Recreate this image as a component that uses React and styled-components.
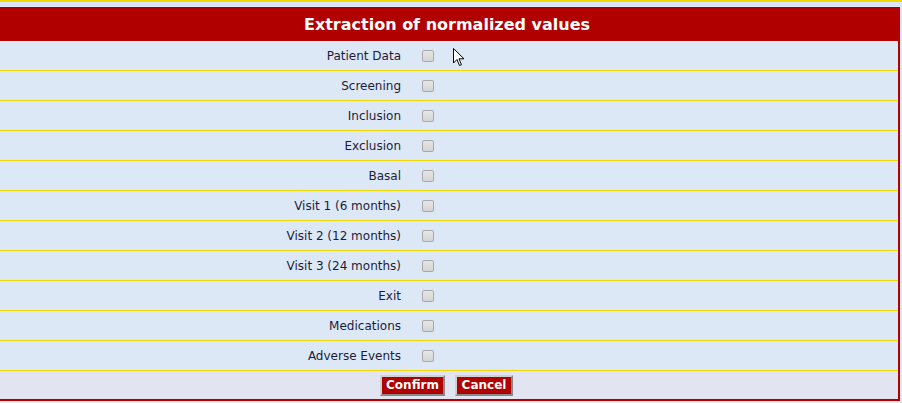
import styled, { createGlobalStyle } from 'styled-components';

const GlobalStyle = createGlobalStyle`
  html, body {
    margin: 0;
    padding: 0;
    background: #dde8f7;
  }
  body {
    font-family: "DejaVu Sans", Verdana, sans-serif;
  }
`;

const sections = [
  'Patient Data',
  'Screening',
  'Inclusion',
  'Exclusion',
  'Basal',
  'Visit 1 (6 months)',
  'Visit 2 (12 months)',
  'Visit 3 (24 months)',
  'Exit',
  'Medications',
  'Adverse Events',
];

const Page = styled.div`
  position: relative;
  width: 902px;
  height: 403px;
  overflow: hidden;
`;

const TopRule = styled.div`
  height: 2px;
  background: #f0d800;
  margin-bottom: 5px;
`;

const Panel = styled.div`
  width: 898px;
  border-right: 2px solid #b00000;
  border-bottom: 2px solid #b00000;
`;

const Header = styled.h1`
  margin: 0 -2px 0 0;
  height: 34px;
  background: #b00000;
  color: #fff;
  font-size: 16px;
  font-weight: bold;
  display: flex;
  align-items: center;
  justify-content: center;
  padding-right: 6px;
`;

const Row = styled.label`
  display: grid;
  grid-template-columns: 401px 1fr;
  align-items: center;
  height: 29px;
  border-bottom: 1px solid #f0d800;
  background: #dde8f7;
`;

const Label = styled.span`
  text-align: right;
  font-size: 12px;
  color: #1c1c3a;
`;

const Check = styled.input`
  appearance: none;
  margin: 0 0 0 21px;
  width: 12px;
  height: 12px;
  border: 1px solid #a9a9a9;
  border-radius: 2px;
  background: linear-gradient(#e6e6e6, #d4d4d4);
`;

const Footer = styled.div`
  height: 28px;
  background: #e3e4f1;
  display: flex;
  align-items: center;
  justify-content: center;
  gap: 10px;
  padding-right: 5px;
`;

const Button = styled.button`
  height: 21px;
  padding: 0;
  background: #b00000;
  color: #fff;
  font-family: "DejaVu Sans", Verdana, sans-serif;
  font-size: 12px;
  font-weight: bold;
  border: 2px solid;
  border-color: #d0d0d0 #888 #888 #d0d0d0;
  width: ${(p) => p.$w}px;
`;

const Cursor = styled.svg`
  position: absolute;
  left: 453px;
  top: 48px;
`;

export default function App() {
  return (
    <Page>
      <GlobalStyle />
      <TopRule />
      <Panel>
        <Header>Extraction of normalized values</Header>
        {sections.map((s) => (
          <Row key={s}>
            <Label>{s}</Label>
            <Check type="checkbox" />
          </Row>
        ))}
        <Footer>
          <Button $w={65}>Confirm</Button>
          <Button $w={58}>Cancel</Button>
        </Footer>
      </Panel>
      <Cursor width="14" height="20" viewBox="0 0 14 20">
        <path d="M0.5 0.5 L0.5 15 L4 11.5 L6.5 17.5 L8.5 16.7 L6 10.8 L11 10.8 Z" fill="#fff" stroke="#000" strokeWidth="1" />
      </Cursor>
    </Page>
  );
}
